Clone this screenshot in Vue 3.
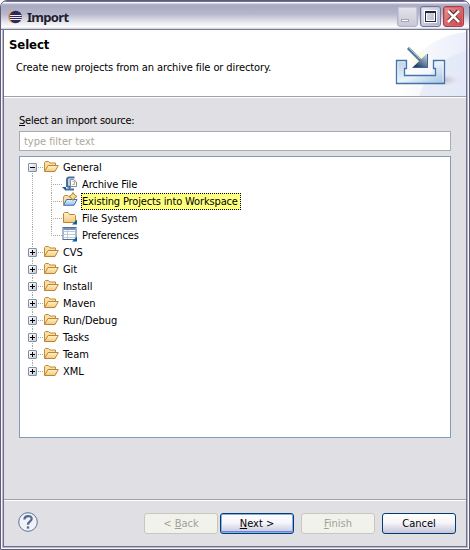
<script setup>
const sources = [
  { name: 'Archive File', icon: 'archive' },
  { name: 'Existing Projects into Workspace', icon: 'project', selected: true },
  { name: 'File System', icon: 'system' },
  { name: 'Preferences', icon: 'prefs' },
]
const folders = ['CVS', 'Git', 'Install', 'Maven', 'Run/Debug', 'Tasks', 'Team', 'XML']
</script>

<template>
  <div class="window">
    <svg class="defs" width="0" height="0">
      <defs>
        <linearGradient id="fold" x1="0" y1="0" x2="0" y2="1"><stop offset="0" stop-color="#fff3cc" /><stop offset="1" stop-color="#f2c878" /></linearGradient>
        <linearGradient id="blue" x1="0" y1="0" x2="0" y2="1"><stop offset="0" stop-color="#e8f2fd" /><stop offset="1" stop-color="#94bbea" /></linearGradient>
        <symbol id="folder" viewBox="0 0 16 16">
          <path d="M1.500 12V3.500L2.500 2.500H5.500L7 4H12.500V6.500" fill="#f9dfa0" stroke="#c08a3e" />
          <path d="M1.500 12.500L5 6.500H15.300L12 12.500Z" fill="url(#fold)" stroke="#bd8438" />
        </symbol>
      </defs>
    </svg>
    <header class="titlebar">
      <svg class="logo" viewBox="0 0 14 14" width="14" height="14">
        <circle cx="6.300" cy="7" r="6.200" fill="#f39a38" /><circle cx="7.700" cy="7" r="6.200" fill="#2f2858" />
        <path d="M2 5.500H13.500M1.700 7.500H13.800M2 9.500H13.500" stroke="#eeeef8" />
      </svg>
      <h1>Import</h1>
      <div class="controls">
        <span class="ctl min"><svg viewBox="0 0 21 21" width="21" height="21"><rect x="4.500" y="13.500" width="7" height="2" fill="#fff" stroke="#a4a4b4" /></svg></span>
        <span class="ctl max"><svg viewBox="0 0 21 21" width="21" height="21"><rect x="5.500" y="5.500" width="10" height="10" fill="none" stroke="#fff" stroke-width="3" /><rect x="5.500" y="5.500" width="10" height="10" fill="none" stroke="#26263a" /><path d="M5 6H16" stroke="#26263a" stroke-width="2" /></svg></span>
        <span class="ctl close"><svg viewBox="0 0 21 21" width="21" height="21"><path d="M5.500 5L15.500 15.500M15.500 5L5.500 15.500" stroke="#4c1c24" stroke-width="4" /><path d="M5 5L16 16M16 5L5 16" stroke="#fff" stroke-width="2.600" /></svg></span>
      </div>
    </header>
    <section class="banner">
      <div class="heading">
        <h2>Select</h2>
        <p>Create new projects from an archive file or directory.</p>
      </div>
      <svg class="art" viewBox="0 0 75 66" width="75" height="66">
        <defs>
          <linearGradient id="sweep" x1="0" y1="0" x2="1" y2="0"><stop offset="0" stop-color="#fff" /><stop offset="1" stop-color="#e4e9f8" /></linearGradient>
          <linearGradient id="tray" x1="0" y1="0" x2="1" y2="1"><stop offset="0" stop-color="#b9cde6" /><stop offset=".5" stop-color="#e8f3fb" /><stop offset="1" stop-color="#a5c1e0" /></linearGradient>
          <radialGradient id="glow"><stop offset="0" stop-color="#fff3a8" /><stop offset="1" stop-color="#fff3a8" stop-opacity="0" /></radialGradient>
          <radialGradient id="shade"><stop offset="0" stop-color="#b9a4a8" /><stop offset="1" stop-color="#d8cdd5" stop-opacity="0" /></radialGradient>
          <linearGradient id="head" x1="1" y1="0" x2=".3" y2="1"><stop offset="0" stop-color="#d4e6f5" /><stop offset="1" stop-color="#16345f" /></linearGradient>
        </defs>
        <path d="M5 66Q22 8 75 2V66Z" fill="url(#sweep)" opacity=".75" />
        <path d="M28 66Q40 30 75 21V66Z" fill="#dce4f6" opacity=".55" />
        <ellipse cx="53" cy="50" rx="16" ry="6" fill="url(#shade)" opacity=".7" />
        <circle cx="29" cy="29" r="10" fill="url(#glow)" opacity=".6" />
        <path d="M5.500 30.500H15.500V38.500H13.500V45.500H44.500V38.500H42.500V30.500H53.500V53.500H5.500Z" fill="url(#tray)" stroke="#4674aa" stroke-width="1.300" />
        <path d="M7 52V32H14M46 32H52V52" fill="none" stroke="#f6fbff" opacity=".7" />
        <path d="M17 18L30 31" stroke="#52789f" stroke-width="3" />
        <path d="M17.500 17.500L29 29" stroke="#a3c3dc" />
        <path d="M36.500 23V38H21Z" fill="url(#head)" />
        <path d="M22 37.500H36.500V24" fill="none" stroke="#41658d" />
      </svg>
    </section>
    <main class="body">
      <label class="caption"><u>S</u>elect an import source:</label>
      <div class="filter">type filter text</div>
      <div class="tree">
        <div class="row root first">
          <span class="toggle"></span><span class="link"></span>
          <svg class="icon" width="16" height="16"><use href="#folder" /></svg><span class="name">General</span>
        </div>
        <div v-for="s in sources" :key="s.name" class="row child">
          <span class="trunk"></span><span class="branch"></span>
          <svg class="icon" viewBox="0 0 16 16" width="16" height="16">
            <g v-if="s.icon === 'archive'">
              <path d="M6 3.500V9.500" stroke="#e3edf7" stroke-width="4" />
              <path d="M12.500 1.500H7Q5 1.500 5 4V11" fill="none" stroke="#4d6f9d" stroke-width="2" />
              <path d="M5 10.500H9M7.500 10V13" stroke="#4d6f9d" stroke-width="2" />
              <path d="M4 13.500H12" stroke="#4d6f9d" stroke-width="2" />
              <path d="M7 3V9" stroke="#a9c4e2" stroke-width="1.500" />
              <path d="M8.500 3.500H11.500L14.500 6V10.500H8.500Z" fill="#fdfdf5" stroke="#6f8db5" />
              <path d="M10.500 5.500H12.500V8.500H10.500" fill="none" stroke="#d6ac62" />
              <path d="M0 11H4V15Z" fill="#0862a5" />
            </g>
            <g v-else-if="s.icon === 'project'">
              <path d="M1.500 11V4L2.500 2.500H6L7.500 4H12V7" fill="#f9dfa0" stroke="#b9944f" />
              <path d="M1.500 12.300L4.500 6.500H15L12 12.300Z" fill="url(#blue)" stroke="#3e6eb5" />
              <path d="M11 -.5L12.500 2L15 3.500L12.500 5L11 7.500L9.500 5L7 3.500L9.500 2Z" fill="#f7dd8d" stroke="#b18631" />
            </g>
            <g v-else-if="s.icon === 'system'">
              <path d="M1.500 12.500V3.500L2.500 2.500H6L7.500 4.500H12.500L13.500 5.500V12.500Z" fill="url(#fold)" stroke="#bd8438" />
              <path d="M15 9.500V14.500H10Z" fill="#0862a5" />
            </g>
            <g v-else>
              <rect x="1" y=".5" width="13" height="12" fill="#fff" stroke="#526d91" />
              <path d="M1.500 2H13.500" stroke="#7594bd" stroke-width="2" />
              <path d="M1.500 4.500H13.500M1.500 7.500H13.500M1.500 10.500H13.500M5.500 3V12" stroke="#b9c9de" />
              <path d="M15 9.500V14.500H10Z" fill="#0862a5" />
            </g>
          </svg>
          <span class="name" :class="{ selected: s.selected }">{{ s.name }}</span>
        </div>
        <div v-for="(f, i) in folders" :key="f" class="row root" :class="{ last: i === folders.length - 1 }">
          <span class="toggle plus"></span><span class="link"></span>
          <svg class="icon" width="16" height="16"><use href="#folder" /></svg><span class="name">{{ f }}</span>
        </div>
      </div>
    </main>
    <footer class="footer">
      <svg class="help" viewBox="0 0 20 20" width="20" height="20">
        <circle cx="10" cy="10" r="9.300" fill="#f0f2f7" stroke="#5a7198" />
        <path d="M6.400 7.500C6.400 3 13.700 3 13.700 6.800C13.700 9.500 10 9.300 10 12.800" fill="none" stroke="#526a94" stroke-width="2.200" /><rect x="8.800" y="14.400" width="2.400" height="2.200" fill="#526a94" />
      </svg>
      <button class="btn off" disabled><span>&lt; <u>B</u>ack</span></button>
      <button class="btn next"><span><u>N</u>ext &gt;</span></button>
      <button class="btn off finish" disabled><span><u>F</u>inish</span></button>
      <button class="btn cancel"><span>Cancel</span></button>
    </footer>
  </div>
</template>

<style>
body { margin: 0; background: #fff; }
</style>

<style scoped>
* { box-sizing: border-box; }
.window { width: 470px; height: 550px; display: flex; flex-direction: column; border: 1px solid #5e5b7b; border-radius: 7px 7px 0 0; background: linear-gradient(90deg, #f8f8fc 1px, #b8b8cb 1px 467px, #f8f8fc 467px); padding: 0 2px 2px; font: 11px/17px "DejaVu Sans Condensed", "DejaVu Sans", sans-serif; font-stretch: condensed; color: #000; box-shadow: inset 0 -1px #f8f8fc; }
.defs { position: absolute; }
.titlebar { height: 29px; margin: 0 -2px; padding: 5px 5px 0 7px; display: flex; flex: none; border-radius: 6px 6px 0 0; border-bottom: 1px solid #7b7893; background: linear-gradient(#747291 0 1px, #f5f5fa 1px 2px, #b5b5ca 3px, #a9a9c1 5px, #b7b7cc 13px, #e5e5ed 21px, #fff 26px, #c8c8d8 28px); }
.logo { margin-top: 4px; }
h1 { margin: 3px 0 0 5px; font: bold 13px/16px "Noto Sans", sans-serif; letter-spacing: -.7px; color: #20202e; }
.controls { display: flex; gap: 2px; margin-left: auto; }
.ctl { width: 21px; height: 21px; border-radius: 3px; border: 1px solid #72759a; background: linear-gradient(135deg, #ececf4, #a8acc6); display: flex; align-items: center; justify-content: center; box-shadow: inset 0 0 0 1px #c4c5d8; }
.ctl svg { flex: none; }
.min { border-color: #b3b3c5; background: linear-gradient(#e4e4ec, #c9c9d7); }
.close { border-color: #a53c47; background: linear-gradient(135deg, #ec9292, #c93f44); box-shadow: inset 0 0 0 1px #d06a70; }
.banner { height: 68px; flex: none; display: flex; justify-content: space-between; background: #fff; border: 1px solid #706e8c; border-width: 0 1px 0; box-shadow: inset 0 -1px #fff, inset 0 -2px #a09fa5; }
.heading { padding: 7px 0 0 5px; }
h2 { margin: 0; font: bold 13px/16px "DejaVu Sans Condensed", "DejaVu Sans", sans-serif; font-stretch: condensed; letter-spacing: -.1px; }
p { margin: 6px 0 0 7px; line-height: 17px; white-space: nowrap; letter-spacing: -.1px; }
.art { flex: none; }
.body { height: 402px; flex: none; background: #e0dfe3; border: 1px solid #706e8c; border-width: 0 1px; padding: 14px 15px 0; box-shadow: inset 0 -1px #a09fa5; }
.caption { display: block; height: 19px; line-height: 17px; letter-spacing: -.24px; }
.filter { height: 20px; border: 1px solid #a5acb2; background: #fff; padding-left: 4px; line-height: 19px; color: #aca899; letter-spacing: -.02px; }
.tree { margin-top: 5px; height: 282px; border: 1px solid #7f9db9; background: #fff; padding-top: 2px; }
.row { height: 17px; display: flex; align-items: center; position: relative; padding-left: 8px; }
.root::before, .trunk { content: ""; position: absolute; left: 12px; top: 0; width: 1px; height: 17px; background: repeating-linear-gradient(#aca899 0 1px, transparent 1px 2px); }
.first::before { top: 8px; height: 9px; }
.last::before { height: 8px; }
.toggle { width: 9px; height: 9px; flex: none; position: relative; border: 1px solid #7f8fa9; border-radius: 1px; background: linear-gradient(#000, #000) 1px 3px / 5px 1px no-repeat, linear-gradient(135deg, #fff, #c8c8d6); }
.plus { background: linear-gradient(#000, #000) 1px 3px / 5px 1px no-repeat, linear-gradient(#000, #000) 3px 1px / 1px 5px no-repeat, linear-gradient(135deg, #fff, #c8c8d6); }
.link { width: 6px; height: 1px; flex: none; background: repeating-linear-gradient(90deg, transparent 0 1px, #aca899 1px 2px); }
.icon { flex: none; align-self: flex-start; overflow: visible; }
.name { height: 17px; padding: 0 2px; margin-left: 2px; white-space: nowrap; line-height: 17px; letter-spacing: -.06px; }
.child { padding-left: 31px; }
.child::before { content: ""; position: absolute; left: 31px; top: 0; height: 17px; width: 1px; background: repeating-linear-gradient(#aca899 0 1px, transparent 1px 2px); }
.child:nth-child(5)::before { height: 9px; }
.branch { width: 11px; height: 1px; flex: none; background: repeating-linear-gradient(90deg, #aca899 0 1px, transparent 1px 2px); }
.child .name { margin-left: 3px; padding: 0 1px; letter-spacing: -.12px; }
.child .selected { background: #ffff80; outline: 1px dotted #000; outline-offset: -1px; padding: 0 3px 0 1px; letter-spacing: -.15px; }
.footer { height: 47px; flex: none; display: flex; background: #e0dfe3; border: 1px solid #706e8c; border-width: 0 1px 1px; padding: 13px 10px 0 14px; box-shadow: inset 0 1px #fff; }
.help { margin-top: -1px; }
.btn { width: 74px; height: 21px; padding: 1px 0 0; font: inherit; line-height: 18px; color: #000; border: 1px solid #003c74; border-radius: 3px; background: linear-gradient(#fff, #f6f6fb 45%, #c6c5d7); }
.btn.off { color: #a1a192; border-color: #c9c7ba; background: #f2f2ed; }
.help + .btn { margin-left: 106px; }
.next { margin-left: 2px; box-shadow: inset 0 0 0 1px #8aaee8, inset 0 -2px #6982ee; }
.finish, .cancel { margin-left: 7px; }
</style>
